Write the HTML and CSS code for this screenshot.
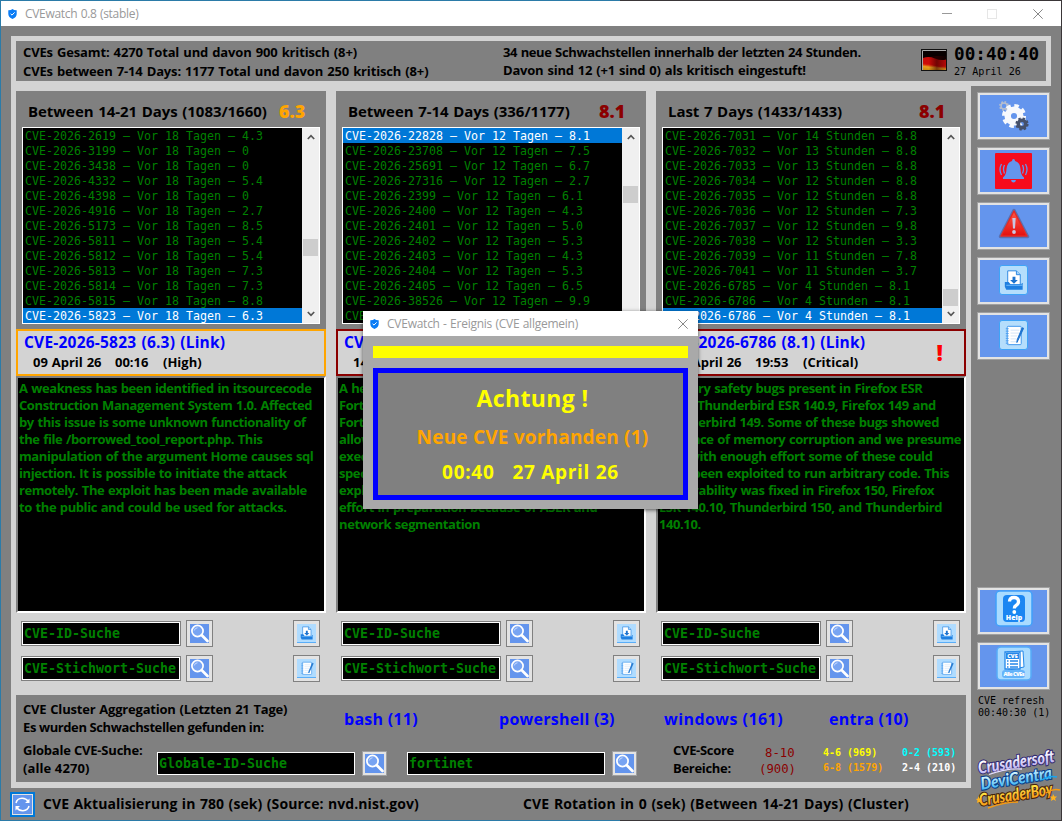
FILE: index.html
```html
<!DOCTYPE html>
<html lang="de">
<head>
  <meta charset="UTF-8">
  <title>CVEwatch 0.8 (stable)</title>
  <link rel="stylesheet" href="styles.css">
</head>
<body>
  <!-- Icons -->
  <svg class="defs" width="0" height="0">
    <linearGradient id="g-red" x1="0" y1="0" x2="0" y2="1"><stop offset="0" stop-color="#ff5a48"/><stop offset="1" stop-color="#e30f0f"/></linearGradient>
    <symbol id="shield" viewBox="0 0 9 10"><path d="M0.3 1.2Q3 1.3 4.500 0Q6 1.300 8.700 1.200V5Q8.600 8.300 4.500 10Q0.400 8.300 0.300 5Z" fill="#0a7cf5"/><path d="M2.600 4.800L4 6.100L6.600 3.400" fill="none" stroke="#fff" stroke-width="1"/></symbol>
    <symbol id="close" viewBox="0 0 10 10"><path d="M0.300 0.300L9.700 9.700M9.700 0.300L0.300 9.700" stroke="#888" fill="none"/></symbol>
    <symbol id="up" viewBox="0 0 8 6"><path d="M0.800 5L4 1.700L7.200 5" fill="none" stroke="#555" stroke-width="1.700"/></symbol>
    <symbol id="down" viewBox="0 0 8 6"><path d="M0.800 1L4 4.300L7.200 1" fill="none" stroke="#555" stroke-width="1.700"/></symbol>
    <symbol id="lupe" viewBox="0 0 19 19"><rect width="19" height="19" fill="#6495ed"/><circle cx="7.500" cy="7" r="5.600" fill="#78a4f2" stroke="#fff" stroke-width="1.700"/><path d="M4.300 6.500A3.300 3.300 0 0 1 7.500 3.800" fill="none" stroke="#c9dcff" stroke-width="1"/><path d="M11.800 11.300L17.500 17" stroke="#fff" stroke-width="2.700" stroke-linecap="round"/></symbol>
    <symbol id="save" viewBox="0 0 28 28"><path d="M8 4.500H17L21 8.500V19H8Z" fill="#fff" stroke="#2d87e2" stroke-width="1"/><path d="M17 4.500V8.500H21" fill="#9dd0fb" stroke="#2d87e2" stroke-width="1"/><path d="M13 10.500H16V14H18.500L14.500 18L10.500 14H13Z" fill="#1d73ce"/><path d="M5 16H9L11 18.500H22.500V17H23.500V24H6.500L5 21Z" fill="#1f7fe0"/><path d="M6.500 19.500H23.500" stroke="#6fb9fa" stroke-width="1"/></symbol>
    <symbol id="note" viewBox="0 0 28 28"><rect x="7.500" y="5" width="14.500" height="19" rx="1" fill="#fff" stroke="#3c95ec" stroke-width="1"/><path d="M6 7.500H9M6 10H9M6 12.500H9M6 15H9M6 17.500H9M6 20H9M6 22.500H9" stroke="#4d9ff0" stroke-width="1"/><path d="M11 9H20M11 12H20M11 15H18M11 18H17M11 21H19" stroke="#c8dff5" stroke-width=".8"/><path d="M24.500 7L18.700 19.500L17.500 21.800L17.800 19L23 6.500Z" fill="#1d73ce" stroke="#1d73ce" stroke-width="1"/></symbol>
  </svg>

  <div class="titlebar">
    <svg class="shield"><use href="#shield"/></svg>
    <span class="caption">CVEwatch 0.8 (stable)</span>
    <i class="min"></i><i class="max"></i>
    <svg class="close"><use href="#close"/></svg>
  </div>

  <div class="window">
    <header class="header">
      <div class="stats">
        <p class="st1">CVEs Gesamt: 4270 Total und davon 900 kritisch (8+)</p>
        <p class="st2">CVEs between 7-14 Days: 1177 Total und davon 250 kritisch (8+)</p>
      </div>
      <div class="news">
        <p class="nw1">34 neue Schwachstellen innerhalb der letzten 24 Stunden.</p>
        <p class="nw2">Davon sind 12 (+1 sind 0) als kritisch eingestuft!</p>
      </div>
      <svg class="flag" viewBox="0 0 26 22">
        <defs>
          <linearGradient id="g-flag" x1=".35" y1="0" x2=".15" y2="1">
            <stop offset=".3" stop-color="#080000"/><stop offset=".4" stop-color="#c80a08"/><stop offset=".62" stop-color="#d61a0a"/><stop offset=".78" stop-color="#e8a020"/><stop offset="1" stop-color="#c98a10"/>
          </linearGradient>
          <linearGradient id="g-shade" x1="0" y1="0" x2="1" y2="0">
            <stop offset=".25" stop-color="#300" stop-opacity="0"/><stop offset=".6" stop-color="#300" stop-opacity=".6"/><stop offset="1" stop-color="#300" stop-opacity=".15"/>
          </linearGradient>
        </defs>
        <rect width="26" height="22" fill="#111"/>
        <path d="M1.500 21V1.500H25" fill="none" stroke="#a8a8a8"/>
        <rect x="2" y="2" width="23" height="19" fill="#080000"/>
        <path d="M2 7.500Q8 6 14 8.500T25 10V21H2Z" fill="url(#g-flag)"/>
        <path d="M2 9Q8 7 14 9.500T25 10.500V16Q19 19 13 16.500T2 14.500Z" fill="#cc0b08"/>
        <path d="M2 7H25V21H2Z" fill="url(#g-shade)"/>
      </svg>
      <div class="clock">
        <div class="time">00:40:40</div>
        <div class="date">27 April 26</div>
      </div>
    </header>

    <div class="body">
      <main class="main">
        <div class="columns">
          <section class="col">
            <div class="col-head"><h2>Between 14-21 Days (1083/1660)</h2><b class="orange">6.3</b></div>
            <div class="listbox">
              <ul>
                <li>CVE-2026-2619 – Vor 18 Tagen – 4.3</li>
                <li>CVE-2026-3199 – Vor 18 Tagen – 0</li>
                <li>CVE-2026-3438 – Vor 18 Tagen – 0</li>
                <li>CVE-2026-4332 – Vor 18 Tagen – 5.4</li>
                <li>CVE-2026-4398 – Vor 18 Tagen – 0</li>
                <li>CVE-2026-4916 – Vor 18 Tagen – 2.7</li>
                <li>CVE-2026-5173 – Vor 18 Tagen – 8.5</li>
                <li>CVE-2026-5811 – Vor 18 Tagen – 5.4</li>
                <li>CVE-2026-5812 – Vor 18 Tagen – 5.4</li>
                <li>CVE-2026-5813 – Vor 18 Tagen – 7.3</li>
                <li>CVE-2026-5814 – Vor 18 Tagen – 7.3</li>
                <li>CVE-2026-5815 – Vor 18 Tagen – 8.8</li>
                <li class="sel">CVE-2026-5823 – Vor 18 Tagen – 6.3</li>
              </ul>
              <div class="scroll"><svg><use href="#up"/></svg><i class="thumb t1"></i><svg><use href="#down"/></svg></div>
            </div>
            <div class="card high">
              <div><a>CVE-2026-5823 (6.3) (Link)</a><p><span class="day">09 April 26</span><span class="hour">00:16</span><span>(High)</span></p></div>
            </div>
            <div class="desc">A weakness has been identified in itsourcecode<br>Construction Management System 1.0. Affected<br>by this issue is some unknown functionality of<br>the file /borrowed_tool_report.php. This<br>manipulation of the argument Home causes sql<br>injection. It is possible to initiate the attack<br>remotely. The exploit has been made available<br>to the public and could be used for attacks.</div>
            <div class="search">
              <input value="CVE-ID-Suche"><button><svg><use href="#lupe"/></svg></button><button class="light"><svg><use href="#save"/></svg></button>
              <input value="CVE-Stichwort-Suche"><button><svg><use href="#lupe"/></svg></button><button class="light"><svg><use href="#note"/></svg></button>
            </div>
          </section>

          <section class="col">
            <div class="col-head"><h2>Between 7-14 Days (336/1177)</h2><b class="dark">8.1</b></div>
            <div class="listbox">
              <ul>
                <li class="sel">CVE-2026-22828 – Vor 12 Tagen – 8.1</li>
                <li>CVE-2026-23708 – Vor 12 Tagen – 7.5</li>
                <li>CVE-2026-25691 – Vor 12 Tagen – 6.7</li>
                <li>CVE-2026-27316 – Vor 12 Tagen – 2.7</li>
                <li>CVE-2026-2399 – Vor 12 Tagen – 6.1</li>
                <li>CVE-2026-2400 – Vor 12 Tagen – 4.3</li>
                <li>CVE-2026-2401 – Vor 12 Tagen – 5.0</li>
                <li>CVE-2026-2402 – Vor 12 Tagen – 5.3</li>
                <li>CVE-2026-2403 – Vor 12 Tagen – 4.3</li>
                <li>CVE-2026-2404 – Vor 12 Tagen – 5.3</li>
                <li>CVE-2026-2405 – Vor 12 Tagen – 6.5</li>
                <li>CVE-2026-38526 – Vor 12 Tagen – 9.9</li>
                <li>CVE-2026-38527</li>
              </ul>
              <div class="scroll"><svg><use href="#up"/></svg><i class="thumb t2"></i><svg><use href="#down"/></svg></div>
            </div>
            <div class="card critical">
              <div><a>CVE-2026-22828 (8.1) (Link)</a><p><span class="day">14 April 26</span></p></div>
            </div>
            <div class="desc">A heap-based buffer overflow in<br>Fortinet FortiAnalyzer Cloud and<br>FortiManager Cloud may<br>allow an attacker to<br>execute code via<br>specific requests. The<br>exploit needs a large<br>effort in preparation because of ASLR and<br>network segmentation</div>
            <div class="search">
              <input value="CVE-ID-Suche"><button><svg><use href="#lupe"/></svg></button><button class="light"><svg><use href="#save"/></svg></button>
              <input value="CVE-Stichwort-Suche"><button><svg><use href="#lupe"/></svg></button><button class="light"><svg><use href="#note"/></svg></button>
            </div>
          </section>

          <section class="col">
            <div class="col-head"><h2>Last 7 Days (1433/1433)</h2><b class="dark">8.1</b></div>
            <div class="listbox">
              <ul>
                <li>CVE-2026-7031 – Vor 14 Stunden – 8.8</li>
                <li>CVE-2026-7032 – Vor 13 Stunden – 8.8</li>
                <li>CVE-2026-7033 – Vor 13 Stunden – 8.8</li>
                <li>CVE-2026-7034 – Vor 12 Stunden – 8.8</li>
                <li>CVE-2026-7035 – Vor 12 Stunden – 8.8</li>
                <li>CVE-2026-7036 – Vor 12 Stunden – 7.3</li>
                <li>CVE-2026-7037 – Vor 12 Stunden – 9.8</li>
                <li>CVE-2026-7038 – Vor 12 Stunden – 3.3</li>
                <li>CVE-2026-7039 – Vor 11 Stunden – 7.8</li>
                <li>CVE-2026-7041 – Vor 11 Stunden – 3.7</li>
                <li>CVE-2026-6785 – Vor 4 Stunden – 8.1</li>
                <li>CVE-2026-6786 – Vor 4 Stunden – 8.1</li>
                <li class="sel">CVE-2026-6786 – Vor 4 Stunden – 8.1</li>
              </ul>
              <div class="scroll"><svg><use href="#up"/></svg><i class="thumb t3"></i><svg><use href="#down"/></svg></div>
            </div>
            <div class="card critical">
              <div><a>CVE-2026-6786 (8.1) (Link)</a><p><span class="day">21 April 26</span><span class="hour">19:53</span><span>(Critical)</span></p></div>
              <strong>!</strong>
            </div>
            <div class="desc">Memory safety bugs present in Firefox ESR<br>140.9, Thunderbird ESR 140.9, Firefox 149 and<br>Thunderbird 149. Some of these bugs showed<br>evidence of memory corruption and we presume<br>that with enough effort some of these could<br>have been exploited to run arbitrary code. This<br>vulnerability was fixed in Firefox 150, Firefox<br>ESR 140.10, Thunderbird 150, and Thunderbird<br>140.10.</div>
            <div class="search">
              <input value="CVE-ID-Suche"><button><svg><use href="#lupe"/></svg></button><button class="light"><svg><use href="#save"/></svg></button>
              <input value="CVE-Stichwort-Suche"><button><svg><use href="#lupe"/></svg></button><button class="light"><svg><use href="#note"/></svg></button>
            </div>
          </section>
        </div>

        <section class="cluster">
          <div class="found">
            <div class="label"><p class="wide">CVE Cluster Aggregation (Letzten 21 Tage)</p><p>Es wurden Schwachstellen gefunden in:</p></div>
            <a>bash (11)</a><a>powershell (3)</a><a class="win">windows (161)</a><a>entra (10)</a>
          </div>
          <div class="global">
            <div class="label g-label"><p>Globale CVE-Suche:</p><p>(alle 4270)</p></div>
            <input value="Globale-ID-Suche"><button><svg><use href="#lupe"/></svg></button>
            <input class="second" value="fortinet"><button><svg><use href="#lupe"/></svg></button>
            <div class="label s-label"><p>CVE-Score</p><p>Bereiche:</p></div>
            <div class="score s-crit"><p>8-10</p><p>(900)</p></div>
            <div class="score s-mid"><p class="yellow">4-6 (969)</p><p class="orange">6-8 (1579)</p></div>
            <div class="score"><p class="cyan">0-2 (593)</p><p class="white">2-4 (210)</p></div>
          </div>
        </section>
      </main>

      <aside class="sidebar">
        <button><svg width="36" height="36" viewBox="0 0 36 36">
          <circle cx="8" cy="8" r="3" fill="none" stroke="#b9bfcc" stroke-width="1.500"/><circle cx="8" cy="8" r="4.200" fill="none" stroke="#b9bfcc" stroke-width="1.500" stroke-dasharray="1.700 1.600"/>
          <circle cx="18" cy="18" r="6.300" fill="none" stroke="#f7f9fd" stroke-width="6.500"/><circle cx="18" cy="18" r="10.300" fill="none" stroke="#f7f9fd" stroke-width="3.500" stroke-dasharray="4.500 3.590"/>
          <circle cx="26" cy="26" r="3.700" fill="none" stroke="#45506a" stroke-width="3.500"/><circle cx="26" cy="26" r="5.600" fill="none" stroke="#45506a" stroke-width="2" stroke-dasharray="2.400 2"/>
        </svg></button>
        <button><svg width="37" height="36" viewBox="0 0 37 36">
          <rect width="37" height="36" rx="1" fill="#f60b1d"/>
          <g fill="#6495ed"><path d="M18.500 6Q20 6 20 8Q25 9.500 25.500 16Q25.700 22 29 24.500V26H8V24.500Q11.300 22 11.500 16Q12 9.500 17 8Q17 6 18.500 6Z"/><path d="M16 27H21Q20.500 29.500 18.500 29.500T16 27Z"/></g>
          <g fill="none" stroke="#6495ed" stroke-width="1.300"><path d="M9.500 12Q7.500 16 9.500 20.500M6.500 11Q3.500 16.500 6.500 22M27.500 12Q29.500 16 27.500 20.500M30.500 11Q33.500 16.500 30.500 22"/></g>
        </svg></button>
        <button><svg class="warn" width="32" height="31" viewBox="0 0 32 31">
          <path d="M16 2.500L29.500 28.500H2.500Z" fill="url(#g-red)" stroke="#5c6fae" stroke-width="3.500" stroke-linejoin="round"/>
          <path d="M16 3L29 28H3Z" fill="url(#g-red)" stroke="#e42a25" stroke-width="1.500" stroke-linejoin="round"/>
          <path d="M14.300 10H17.700L17 20.500H15Z" fill="#c9c7e2"/><circle cx="16" cy="24" r="1.900" fill="#c9c7e2"/>
        </svg></button>
        <button><span class="tile"><svg><use href="#save"/></svg></span></button>
        <button><span class="tile"><svg><use href="#note"/></svg></span></button>
        <button class="help"><svg width="38" height="37" viewBox="0 0 38 37">
          <rect x="1" y="1" width="36" height="35" rx="4" fill="#a9dbff" stroke="#3fa0fa" stroke-width="1.500"/>
          <rect x="8" y="5" width="22" height="27" rx="4" fill="#1b86f2"/>
          <path d="M14.500 11.500Q14.700 7.500 19 7.500T23.500 11.500Q23.500 14 21 15.500Q19.300 16.500 19.300 18.500" fill="none" stroke="#fff" stroke-width="3.300"/><circle cx="19.300" cy="22" r="1.900" fill="#fff"/>
          <text x="19" y="30" font-size="7" text-anchor="middle">Help</text>
        </svg></button>
        <button class="all"><svg width="36" height="35" viewBox="0 0 36 35">
          <rect x="1" y="1" width="34" height="33" rx="4" fill="#a9dbff" stroke="#55acf8" stroke-width="1.500"/>
          <path d="M11 6L27 5L28 21L13 24Z" fill="#fff" stroke="#2588e9"/>
          <path d="M9 6H24V23H9Z" fill="#fff" stroke="#2588e9" stroke-width="1.300"/><rect x="10" y="7" width="13" height="6" fill="#2588e9"/>
          <text x="16.500" y="12" font-size="5.500" text-anchor="middle">CVE</text>
          <path d="M11 15H12.500M14 15H22M11 18H12.500M14 18H22M11 21H12.500M14 21H22" stroke="#2588e9" stroke-width="1.300"/>
          <rect x="6" y="24" width="23" height="8" rx="3" fill="#64b3fa"/>
          <text x="18" y="30" font-size="5.500" text-anchor="middle" textLength="21">Alle CVEs</text>
        </svg></button>
        <p class="refresh">CVE refresh<br>00:40:30 (1)</p>
        <svg class="logo" width="85" height="66" viewBox="0 0 85 66">
          <defs>
            <linearGradient id="g1" x1="0" y1="0" x2="0" y2="1"><stop offset=".3" stop-color="#fff"/><stop offset="1" stop-color="#a79bf0"/></linearGradient>
            <linearGradient id="g2" x1="0" y1="0" x2="0" y2="1"><stop offset=".2" stop-color="#dffaff"/><stop offset="1" stop-color="#18a4f0"/></linearGradient>
            <linearGradient id="g3" x1="0" y1="0" x2="0" y2="1"><stop offset=".2" stop-color="#ffe94a"/><stop offset="1" stop-color="#f5860c"/></linearGradient>
          </defs>
          <g transform="rotate(-9)">
            <text x="-1" y="25" font-size="17" textLength="77" lengthAdjust="spacingAndGlyphs" fill="url(#g1)" stroke="#342d72">Crusadersoft</text>
            <text x="-1" y="41" font-size="17" textLength="72" lengthAdjust="spacingAndGlyphs" fill="url(#g2)" stroke="#0b3d88">DeviCentra</text>
            <text x="-5" y="57" font-size="17" textLength="74" lengthAdjust="spacingAndGlyphs" fill="url(#g3)" stroke="#43210b">CrusaderBoy</text>
          </g>
          <path d="M13 25.500Q30 19 46 20" fill="none" stroke="#e3dcff" stroke-width="1.300"/>
          <path d="M66 31Q73 26 81 28" fill="none" stroke="#18a4f0" stroke-width="1.500"/>
          <path d="M12 59Q28 53 42 53M70 44Q77 39 84 41" fill="none" stroke="#f59a12" stroke-width="1.500"/>
          <path d="M2 47L3.500 49.500L6 49.500L4.500 51.500L5.500 54L3 53L1 54L1.500 51.500L0 50L2 49.500ZM77 45L78.500 47.500L81 47.500L79 49.500L80 52L77.500 50.500L75 52L75.500 49.500L74 47.500L76.500 47.500Z" fill="#ffb21d"/>
        </svg>
      </aside>
    </div>

    <footer class="footer">
      <button><svg viewBox="0 0 19 19"><rect width="19" height="19" fill="#6495ed"/><path d="M3 8Q4 3.500 9 3.300Q13 3.200 15.500 6.500M16 11Q15 15.500 10 15.700Q6 15.800 3.500 12.500" fill="none" stroke="#fff" stroke-width="1.500"/><path d="M16.500 3.500V8H12ZM2.500 15.500V11H7Z" fill="#fff"/></svg></button>
      <span class="f1">CVE Aktualisierung in 780 (sek) (Source: nvd.nist.gov)</span>
      <span class="f2">CVE Rotation in 0 (sek) (Between 14-21 Days) (Cluster)</span>
    </footer>
  </div>

  <div class="dialog">
    <div class="dialog-title">
      <svg class="shield"><use href="#shield"/></svg>
      <span class="caption">CVEwatch - Ereignis (CVE allgemein)</span>
      <svg class="close"><use href="#close"/></svg>
    </div>
    <div class="dialog-bar"></div>
    <div class="dialog-box">
      <p class="d1">Achtung !</p>
      <p class="d2">Neue CVE vorhanden (1)</p>
      <p class="d3"><span>00:40</span><span>27 April 26</span></p>
    </div>
  </div>
</body>
</html>
```
FILE: styles.css
```css
* {
  box-sizing: border-box;
}
body {
  margin: 0;
  width: 1062px;
  height: 821px;
  overflow: hidden;
  padding: 1px;
  background: linear-gradient(90deg, #2b7ba8 0, #2b7ba8 620px, #3a3638 620px);
  font-family: "Open Sans", "Noto Sans", sans-serif;
  font-weight: 700;
  color: #000;
}
p, h2, ul {
  margin: 0;
  padding: 0;
}
svg {
  display: block;
  flex: none;
}
.defs {
  position: absolute;
}
button {
  padding: 0;
  margin: 0;
  border: 1px solid #a0a0a0;
  background: #e3e3e3;
  display: flex;
  align-items: center;
  justify-content: center;
}

/* Titelleiste */
.titlebar, .dialog-title {
  display: flex;
  align-items: center;
  height: 25px;
  background: #fff;
  color: #999;
  font-weight: 400;
}
.titlebar {
  padding: 0 18px 0 7px;
}
.shield {
  width: 9px;
  height: 10px;
}
.close {
  width: 10px;
  height: 10px;
}
.caption {
  flex: 1;
  margin-left: 8px;
  padding-bottom: 1px;
  font-size: 12px;
  letter-spacing: -0.3px;
  word-spacing: 0.5px;
  white-space: nowrap;
}
.min {
  width: 10px;
  height: 1px;
  background: #999;
}
.max {
  width: 10px;
  height: 10px;
  margin: 0 36px 0 35px;
  border: 1px solid #e6e6e6;
}

.window {
  height: 794px;
  background: #808080;
  padding: 10px 0 0 10px;
}
.header {
  width: 1040px;
  height: 50px;
  border: 5px solid #d3d3d3;
  display: flex;
  padding-left: 7px;
  font-size: 13px;
  line-height: 19px;
  white-space: nowrap;
}
.stats {
  width: 480px;
  padding-top: 2px;
  letter-spacing: -0.15px;
  word-spacing: 0.9px;
}
.news {
  width: 418px;
  padding-top: 2px;
  line-height: 18px;
}
.nw1 { letter-spacing: -0.37px; word-spacing: 0.5px; }
.nw2 { letter-spacing: -0.22px; word-spacing: 0.9px; }
.flag {
  width: 26px;
  height: 22px;
  margin-top: 8px;
}
.clock {
  margin-left: 7px;
  font-family: "DejaVu Sans Mono", monospace;
}
.time {
  font-size: 17.7px;
  line-height: 20px;
  padding-top: 3px;
}
.date {
  font-size: 10.1px;
  line-height: 16px;
  font-weight: 400;
}

.body {
  display: flex;
  height: 702px;
}
.main {
  width: 960px;
  background: #d3d3d3;
  padding: 5px;
}
.columns {
  display: grid;
  grid-template-columns: repeat(3, 310px);
  column-gap: 10px;
}
.col-head {
  display: grid;
  grid-template-columns: 251px 1fr;
  align-items: center;
  height: 36px;
  padding: 3px 0 0 12px;
  background: #808080;
  white-space: nowrap;
}
.col-head h2 {
  font-size: 15px;
  line-height: 20px;
  letter-spacing: -0.05px;
  word-spacing: 0.8px;
}
.col-head b {
  font-size: 18px;
  line-height: 20px;
}
.orange { color: #ffa500; }
.dark { color: #8b0000; }
.yellow { color: #ff0; }
.cyan { color: #0ff; }
.white { color: #fff; }

/* Listen */
.listbox {
  display: flex;
  width: 310px;
  height: 202px;
  padding-bottom: 5px;
  border-left: 6px solid #808080;
  border-right: 6px solid #808080;
  border-bottom: 5px solid #808080;
}
.listbox ul {
  width: 280px;
  height: 197px;
  border: 1px solid #fff;
  border-right: 0;
  background: #000;
  list-style: none;
}
.listbox li {
  height: 15px;
  padding-left: 2px;
  font: 11.63px/16px "DejaVu Sans Mono", monospace;
  color: #008000;
  white-space: pre;
}
.listbox .sel {
  background: #0078d7;
  color: #fff;
}
.scroll {
  position: relative;
  display: flex;
  flex-direction: column;
  justify-content: space-between;
  align-items: center;
  width: 18px;
  height: 197px;
  padding: 6px 0;
  background: #f0f0f0;
  border: solid #fff;
  border-width: 1px 1px 1px 0;
}
.scroll svg {
  width: 8px;
  height: 6px;
}
.thumb {
  position: absolute;
  left: 1px;
  width: 15px;
  height: 17px;
  background: #cdcdcd;
}
.t1 { top: 111px; }
.t2 { top: 58px; }
.t3 { top: 161px; }

.card {
  display: flex;
  justify-content: space-between;
  height: 47px;
  padding: 0 21px 0 6px;
  border: 2px solid;
  background: #d3d3d3;
  white-space: nowrap;
}
.high { border-color: #ffa500; }
.critical { border-color: #8b0000; }
.card a {
  display: block;
  font-size: 15.5px;
  line-height: 23px;
  letter-spacing: 0.22px;
  word-spacing: 0.8px;
  color: #00f;
}
.card p {
  display: flex;
  padding-left: 9px;
  font-size: 13px;
  line-height: 17px;
  letter-spacing: 0;
  word-spacing: 0.5px;
}
.day { width: 82px; }
.hour { width: 48px; }
.card strong {
  font-size: 22px;
  line-height: 42px;
  color: #f00;
}
.desc {
  height: 237px;
  padding: 2px 1px;
  background: #000;
  border: 2px solid;
  border-color: #808080 #fff #fff #808080;
  color: #008000;
  font-size: 13px;
  line-height: 17px;
  letter-spacing: -0.41px;
  word-spacing: 0.7px;
  white-space: nowrap;
}

input {
  width: 160px;
  height: 25px;
  padding: 0 0 0 2px;
  border: 1px solid #808080;
  outline: 1px solid #fff;
  outline-offset: -2px;
  border-radius: 0;
  background: #000;
  color: #008000;
  font: bold 13.3px "DejaVu Sans Mono", monospace;
}
.search {
  display: grid;
  grid-template-columns: 160px 27px 27px;
  grid-template-rows: 27px 27px;
  row-gap: 8px;
  align-items: center;
  padding: 7px 0 0 5px;
}
.search button {
  width: 27px;
  height: 27px;
  margin-left: 5px;
  border-color: #808080;
}
.search .light {
  margin-left: 85px;
}
.search .light svg {
  background: #b0dcff;
  border-bottom: 1px solid #5aaef8;
}
.search svg, .global svg {
  width: 19px;
  height: 19px;
}

/* Cluster */
.cluster {
  height: 87px;
  margin-top: 13px;
  padding: 5px 0 0 7px;
  background: #808080;
  white-space: nowrap;
}
.found {
  display: grid;
  grid-template-columns: 321px 155px 165px 165px 1fr;
  height: 36px;
  margin-bottom: 5px;
}
.found a {
  font-size: 16px;
  line-height: 38px;
  letter-spacing: 0.25px;
  color: #00f;
}
.found .win { letter-spacing: 0.45px; }
.label {
  font-size: 13px;
  line-height: 18px;
  letter-spacing: -0.4px;
}
.wide {
  letter-spacing: -0.2px;
  word-spacing: 0.7px;
}
.global {
  display: flex;
  height: 36px;
}
.g-label {
  width: 134px;
  letter-spacing: -0.2px;
}
.g-label p:last-child { letter-spacing: 0.1px; }
.global input {
  width: 198px;
  height: 23px;
  margin-top: 11px;
  padding-left: 1px;
  border-color: #fff;
  outline: 0;
}
.global button {
  width: 25px;
  height: 25px;
  margin: 10px 0 0 7px;
}
.global .second { margin-left: 20px; }
.s-label {
  width: 86px;
  margin-left: 36px;
  letter-spacing: -0.3px;
}
.score {
  padding-top: 4px;
  font: bold 10px/15px "DejaVu Sans Mono", monospace;
}
.s-crit {
  width: 64px;
  font-size: 12.3px;
  line-height: 16px;
  font-weight: 400;
  color: #8b0000;
  padding-top: 4px;
}
.s-crit p:first-child { padding-left: 6px; }
.s-mid { width: 79px; }

/* Seitenleiste */
.sidebar {
  padding: 6px 0 0 6px;
}
.sidebar button {
  width: 73px;
  height: 48px;
  margin-bottom: 7px;
  background: #6495ed;
  outline: 2px solid #e3e3e3;
  outline-offset: -3px;
}
.sidebar text {
  font-family: "Open Sans", sans-serif;
  font-weight: 800;
  fill: #fff;
}
.sidebar button svg { margin-top: -1px; }
.sidebar .warn { margin-top: -6px; }
.tile {
  width: 29px;
  height: 30px;
  margin-top: -3px;
  border: 1px solid #3fa4f7;
  border-radius: 3px;
  background: #b5defc;
}
.sidebar .tile svg {
  width: 27px;
  height: 28px;
  margin: 0;
}
.sidebar .help { margin-top: 227px; }
.sidebar .help svg { margin-top: -5px; }
.sidebar .all svg { margin-top: -6px; }
.refresh {
  padding: 3px 0 0 1px;
  margin-top: -5px;
  font: 10px/12px "DejaVu Sans Mono", monospace;
}
.logo {
  margin: 30px 0 -4px -1px;
  overflow: visible;
}
.sidebar .logo text {
  font-family: "Lato", sans-serif;
  font-style: italic;
  font-weight: 900;
  stroke-width: 2.2px;
  paint-order: stroke;
}
.logo text:nth-child(1) { fill: url(#g1); }
.logo text:nth-child(2) { fill: url(#g2); }
.logo text:nth-child(3) { fill: url(#g3); }

.footer {
  display: flex;
  align-items: center;
  height: 32px;
  margin-left: -1px;
  font-size: 14px;
  white-space: nowrap;
}
.footer button {
  width: 25px;
  height: 25px;
  border: 2px solid #0078d7;
}
.footer span { padding-bottom: 2px; }
.footer svg {
  width: 19px;
  height: 19px;
}
.f1 {
  width: 480px;
  margin-left: 8px;
  letter-spacing: 0.08px;
  word-spacing: 0.7px;
}
.f2 {
  letter-spacing: 0.15px;
  word-spacing: 0.8px;
}

/* Meldung */
.dialog {
  position: absolute;
  left: 363px;
  top: 311px;
  width: 335px;
  height: 198px;
  background: #a9a9a9;
  box-shadow: 0 1px 4px rgba(0, 0, 0, .6);
}
.dialog-title { padding: 0 10px 0 7px; }
.dialog-title .caption { letter-spacing: -0.25px; }
.dialog-bar {
  height: 12px;
  margin: 10px;
  background: #ff0;
}
.dialog-box {
  height: 132px;
  margin: 0 10px;
  padding-top: 10px;
  border: 5px solid #00f;
  background: #808080;
  color: #ff0;
  text-align: center;
  white-space: nowrap;
}
.d1 {
  font-size: 23px;
  line-height: 31px;
  padding-left: 4px;
  letter-spacing: 0.4px;
}
.d2 {
  font-size: 19px;
  line-height: 46px;
  padding-left: 4px;
  letter-spacing: 0.2px;
  color: #ffa500;
}
.d3 {
  display: flex;
  justify-content: center;
  gap: 18px;
  font-size: 19px;
  line-height: 25px;
  letter-spacing: 0.7px;
}
```
